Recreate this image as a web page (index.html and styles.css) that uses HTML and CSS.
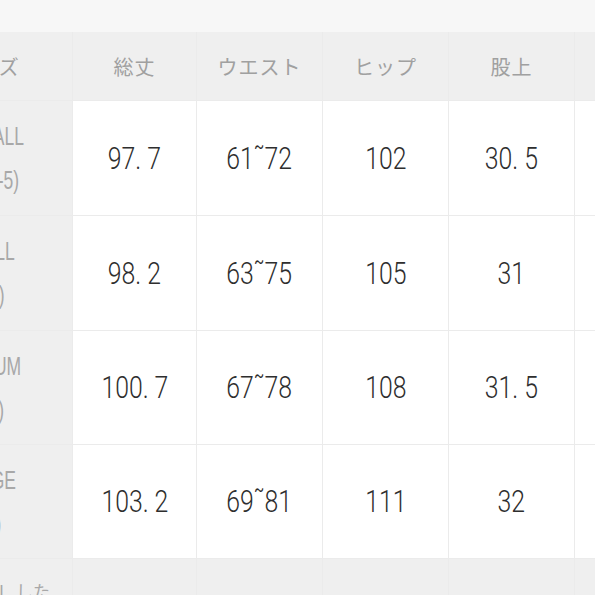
FILE: index.html
```html
<!DOCTYPE html>
<html lang="ja">
<head>
<meta charset="utf-8">
<link rel="stylesheet" href="styles.css">
</head>
<body>
<div class="top"></div>
<div class="table">
  <div class="cell head label"><span>サイズ</span></div>
  <div class="cell head">総丈</div>
  <div class="cell head">ウエスト</div>
  <div class="cell head">ヒップ</div>
  <div class="cell head">股上</div>
  <div class="cell head"></div>

  <div class="cell side"><span class="nar">X-SMALL<br>(XS 3-5)</span></div>
  <div class="cell num"><span class="nar">97. 7</span></div>
  <div class="cell num"><span class="nar">61˜72</span></div>
  <div class="cell num"><span class="nar">102</span></div>
  <div class="cell num"><span class="nar">30. 5</span></div>
  <div class="cell num"></div>

  <div class="cell side"><span class="nar">SMALL<br>(5-7)</span></div>
  <div class="cell num"><span class="nar">98. 2</span></div>
  <div class="cell num"><span class="nar">63˜75</span></div>
  <div class="cell num"><span class="nar">105</span></div>
  <div class="cell num"><span class="nar">31</span></div>
  <div class="cell num"></div>

  <div class="cell side"><span class="nar">MEDIUM<br>(7-9)</span></div>
  <div class="cell num"><span class="nar">100. 7</span></div>
  <div class="cell num"><span class="nar">67˜78</span></div>
  <div class="cell num"><span class="nar">108</span></div>
  <div class="cell num"><span class="nar">31. 5</span></div>
  <div class="cell num"></div>

  <div class="cell side"><span class="nar">LARGE<br>(11)</span></div>
  <div class="cell num"><span class="nar">103. 2</span></div>
  <div class="cell num"><span class="nar">69˜81</span></div>
  <div class="cell num"><span class="nar">111</span></div>
  <div class="cell num"><span class="nar">32</span></div>
  <div class="cell num"></div>

  <div class="cell side last"><span class="jp">MODEL した</span></div>
  <div class="cell foot"></div>
  <div class="cell foot"></div>
  <div class="cell foot"></div>
  <div class="cell foot"></div>
  <div class="cell foot"></div>
</div>
</body>
</html>
```

FILE: styles.css
```css
html, body {
  margin: 0;
  padding: 0;
  background: #f7f7f7;
  overflow: hidden;
  width: 595px;
  height: 595px;
}

.top {
  height: 32px;
  background: #f7f7f7;
}

.table {
  display: grid;
  grid-template-columns: 147px 123px 125px 125px 125px 140px;
  grid-template-rows: 68px 114px 114px 113px 113px 120px;
  gap: 1px;
  background: #ebebeb;
  margin-left: -75px;
  width: 690px;
}

.cell {
  display: flex;
  align-items: center;
  justify-content: center;
  text-align: center;
}

.head {
  background: #efefef;
  color: #a0a0a0;
  font-family: "Noto Sans CJK JP", "Noto Sans", sans-serif;
  font-size: 20px;
  letter-spacing: 1px;
}

.head.label span {
  margin-left: -20px;
}

.nar {
  display: inline-block;
  white-space: nowrap;
}

.side {
  background: #efefef;
  color: #a8a8a8;
  font-family: "Liberation Sans", "Noto Sans CJK JP", sans-serif;
  font-size: 25px;
  line-height: 44px;
  padding-right: 25px;
}

.side .nar {
  transform: scaleX(0.7);
}

.side.last {
  align-items: flex-start;
  justify-content: flex-end;
  padding-top: 22px;
  padding-right: 22px;
}

.side .jp {
  font-family: "Noto Sans CJK JP", sans-serif;
  font-size: 17px;
  line-height: 20px;
  color: #a8a8a8;
  white-space: nowrap;
  word-spacing: 4px;
}

.num {
  background: #ffffff;
  color: #2e2e2e;
  font-family: Roboto, "Liberation Sans", sans-serif;
  font-weight: 300;
  font-size: 31px;
}

.num .nar {
  transform: scaleX(0.8);
}

.foot {
  background: #efefef;
}
```
